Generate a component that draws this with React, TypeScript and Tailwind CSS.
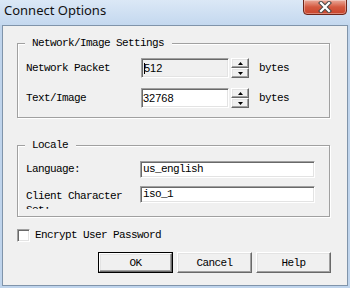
import React from 'react';

const mono = { fontFamily: '"Liberation Mono", monospace' };
const sans = { fontFamily: '"Liberation Sans", Arial, sans-serif' };

const sunken =
  'border border-t-[#a0a0a0] border-l-[#a0a0a0] border-r-white border-b-white shadow-[inset_1px_1px_0_#696969,inset_-1px_-1px_0_#e3e3e3]';
const raised =
  'border border-t-white border-l-white border-r-[#696969] border-b-[#696969] shadow-[inset_-1px_-1px_0_#a0a0a0,inset_1px_1px_0_#e3e3e3] bg-[#f0f0f0]';

function Spin() {
  return (
    <div className="ml-[2px] flex h-[20px] w-[18px] flex-col">
      <div className={`${raised} flex h-[10px] items-center justify-center`}>
        <svg width="5" height="3" viewBox="0 0 5 3">
          <path d="M2.5 0 L5 3 L0 3 Z" fill="#000" />
        </svg>
      </div>
      <div className={`${raised} flex h-[10px] items-center justify-center`}>
        <svg width="5" height="3" viewBox="0 0 5 3">
          <path d="M0 0 L5 0 L2.5 3 Z" fill="#000" />
        </svg>
      </div>
    </div>
  );
}

function CloseButton() {
  return (
    <div className="mr-[3px] flex h-[16px] w-[44px] -mt-px items-center justify-center rounded-b-[4px] border border-[#6d2519] bg-gradient-to-b from-[#e9a99a] via-[#d4583f] to-[#c9452c] shadow-[inset_0_0_0_1px_rgba(255,255,255,0.35)]">
      <svg width="14" height="12" viewBox="0 0 14 12">
        <path d="M3 2 L11 10 M11 2 L3 10" stroke="#4a4a4a" strokeWidth="4.2" strokeLinecap="square" />
        <path d="M3 2 L11 10 M11 2 L3 10" stroke="#fff" strokeWidth="2.2" strokeLinecap="square" />
      </svg>
    </div>
  );
}

function Button({ label, isDefault = false }: { label: string; isDefault?: boolean }) {
  if (isDefault) {
    return (
      <div className="h-[21px] w-[75px] border border-black">
        <div className={`${raised} flex h-full items-center justify-center text-[11px] leading-[12px] tracking-[-0.6px] text-black`} style={mono}>
          {label}
        </div>
      </div>
    );
  }
  return (
    <div className={`${raised} flex h-[21px] w-[75px] items-center justify-center text-[11px] leading-[12px] tracking-[-0.6px] text-black`} style={mono}>
      {label}
    </div>
  );
}

export default function App() {
  return (
    <div className="flex h-[288px] w-[350px] flex-col overflow-hidden bg-[#bfd4ec]">
      <div className="flex h-[25px] shrink-0 items-start justify-between bg-gradient-to-b from-[#dbe8f6] to-[#c4d8ef]">
        <span
          className="pl-[4px] pt-[2px] text-[13px] leading-[16px] text-[#111]"
          style={{ fontFamily: '"Noto Sans", "Open Sans", sans-serif' }}
        >
          Connect Options
        </span>
        <CloseButton />
      </div>

      <div className="ml-[2px] flex h-[261px] w-[346px] flex-col border border-[#8094aa] bg-[#f0f0f0] text-[11px] tracking-[-0.6px] text-black" style={mono}>
        <fieldset className="ml-[14px] mt-[11px] w-[313px] border border-[#a0a0a0] pb-[9px] shadow-[1px_1px_0_#fff,inset_1px_1px_0_#fff]">
          <legend className="relative ml-[7px] bg-[#f0f0f0] pl-[7px] pr-[8px] leading-[12px]">Network/Image Settings</legend>
          <div className="mt-[9px] flex h-[20px] items-center pl-[8px]">
            <span className="w-[115px]">Network Packet</span>
            <div className={`${sunken} relative flex h-[20px] w-[88px] items-center bg-[#f0f0f0] pl-[2px]`}>
              <span className="text-[11px] tracking-normal" style={sans}>512</span>
              <span className="absolute left-[2px] top-[4px] h-[11px] w-px bg-black" />
            </div>
            <Spin />
            <span className="ml-[10px]">bytes</span>
          </div>
          <div className="mt-[10px] flex h-[20px] items-center pl-[8px]">
            <span className="w-[115px]">Text/Image</span>
            <div className={`${sunken} flex h-[20px] w-[88px] items-center bg-white pl-[1px]`}>
              <span className="text-[11px] tracking-normal" style={sans}>32768</span>
            </div>
            <Spin />
            <span className="ml-[10px]">bytes</span>
          </div>
        </fieldset>

        <fieldset className="ml-[14px] mt-[21px] w-[313px] border border-[#a0a0a0] pb-[7px] shadow-[1px_1px_0_#fff,inset_1px_1px_0_#fff]">
          <legend className="relative ml-[7px] bg-[#f0f0f0] pl-[7px] pr-[8px] leading-[12px]">Locale</legend>
          <div className="mt-[10px] flex h-[17px] items-center pl-[8px]">
            <span className="w-[114px]">Language:</span>
            <div className={`${sunken} flex h-[17px] w-[175px] items-center bg-white pl-[2px]`}>us_english</div>
          </div>
          <div className="mt-[8px] flex items-start pl-[8px]">
            <div className="mt-[3px] h-[20px] w-[114px] overflow-hidden pr-[10px] leading-[14px]">Client Character Set:</div>
            <div className={`${sunken} flex h-[17px] w-[175px] items-center bg-white pl-[2px]`}>iso_1</div>
          </div>
        </fieldset>

        <div className="ml-[14px] mt-[12px] flex h-[13px] items-center">
          <div className={`${sunken} h-[13px] w-[13px] bg-white`} />
          <span className="ml-[5px]">Encrypt User Password</span>
        </div>

        <div className="mt-[10px] flex justify-end gap-[4px] pr-[16px]">
          <Button label="OK" isDefault />
          <Button label="Cancel" />
          <Button label="Help" />
        </div>
      </div>
    </div>
  );
}
